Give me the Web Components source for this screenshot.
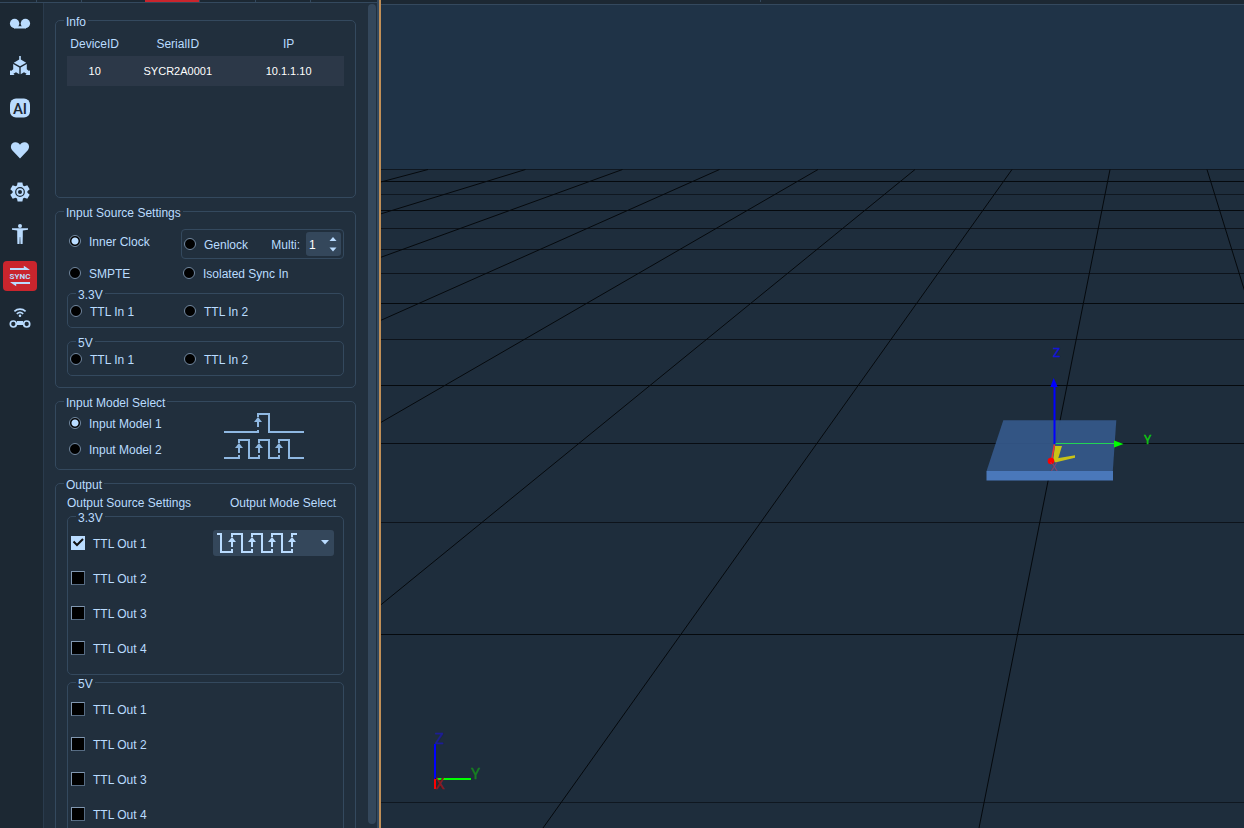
<!DOCTYPE html>
<html lang="en">
<head>
<meta charset="utf-8">
<title>Sync device settings</title>
<style>
  :root {
    --panel: #212f3d; --bar: #1c2833; --line: #34495e; --edge: #34495e;
    --text: #badcff; --field: #34475b; --red: #c9252d;
  }
  * { box-sizing: border-box; }
  html, body { height: 100%; }
  body {
    margin: 0; display: grid; grid-template-columns: auto minmax(0, 1fr);
    overflow: hidden; background: var(--panel); color: var(--text);
    font: 12px/14px "Liberation Sans", Arial, sans-serif;
  }
  .dock { display: grid; grid-template-rows: auto minmax(0, 1fr); min-height: 0; height: 100vh; border-right: 2px solid #c08f57; }
  .dock-inner { border-right: 2px solid var(--edge); display: grid; grid-template-rows: auto minmax(0, 1fr); grid-row: 1 / -1; min-height: 0; }
  .work { display: flex; min-height: 0; }
  .viewport { display: grid; grid-template-rows: auto minmax(0, 1fr); height: 100vh; min-width: 0; }
  .pair { display: grid; grid-template-columns: 114px 1fr; align-items: start; }
  .inputs { padding: 13px 11px 11px; }
  .inputs .lead > :first-child, .inputs .second > * { padding-left: 2px; }
  .inputs .second { margin: 2px 0 3px; }
  .inputs ui-group + ui-group { margin-top: 8px; }
  .ttl-in { padding: 1px 2px 4px; }
  .genlock { display: flex; align-items: center; height: 30px; padding: 0 2px; border: 1px solid var(--line); border-radius: 4px; }
  .genlock ui-spin { margin-left: auto; }
  .models { display: grid; grid-template-columns: 157px 1fr; grid-auto-rows: 26px; align-items: center; padding: 4px 11px 7px; }
  .models ui-choice { padding-left: 2px; }
  .outputs { padding: 8px 11px 11px; }
  .outputs .heads { display: grid; grid-template-columns: 163px 1fr; padding-bottom: 1px; }
  .outputs ui-group + ui-group { margin-top: 2px; }
  .ttl-out { display: grid; grid-auto-rows: 35px; align-items: center; padding: 4px 9px 9px 3px; }
  .ttl-out .first { display: grid; grid-template-columns: 142px 1fr; align-items: center; }
</style>
</head>
<body>
<div class="dock"><div class="dock-inner">
  <tab-strip>
    <i style="width:37px"></i><i style="width:45px"></i><i style="width:63px" class="plain"></i><i style="width:55px" class="active"></i><i style="width:56px"></i><i style="width:55px"></i>
  </tab-strip>
  <div class="work">
    <side-bar></side-bar>
    <scroll-pane>
      <ui-group label="Info"><device-table></device-table></ui-group>

      <ui-group label="Input Source Settings">
        <div class="inputs">
          <div class="pair lead">
            <ui-choice label="Inner Clock" group="source" checked></ui-choice>
            <div class="genlock"><ui-choice label="Genlock" group="source"></ui-choice><ui-spin label="Multi:" value="1"></ui-spin></div>
          </div>
          <div class="pair second">
            <ui-choice label="SMPTE" group="source"></ui-choice>
            <ui-choice label="Isolated Sync In" group="source"></ui-choice>
          </div>
          <ui-group label="3.3V"><div class="pair ttl-in">
            <ui-choice label="TTL In 1" group="source"></ui-choice>
            <ui-choice label="TTL In 2" group="source"></ui-choice>
          </div></ui-group>
          <ui-group label="5V"><div class="pair ttl-in">
            <ui-choice label="TTL In 1" group="source"></ui-choice>
            <ui-choice label="TTL In 2" group="source"></ui-choice>
          </div></ui-group>
        </div>
      </ui-group>

      <ui-group label="Input Model Select">
        <div class="models">
          <ui-choice label="Input Model 1" group="model" checked></ui-choice><wave-icon kind="single"></wave-icon>
          <ui-choice label="Input Model 2" group="model"></ui-choice><wave-icon kind="triple"></wave-icon>
        </div>
      </ui-group>

      <ui-group label="Output">
        <div class="outputs">
          <div class="heads"><span>Output Source Settings</span><span>Output Mode Select</span></div>
          <ui-group label="3.3V"><div class="ttl-out">
            <div class="first"><ui-choice type="checkbox" label="TTL Out 1" checked></ui-choice><mode-select></mode-select></div>
            <ui-choice type="checkbox" label="TTL Out 2"></ui-choice>
            <ui-choice type="checkbox" label="TTL Out 3"></ui-choice>
            <ui-choice type="checkbox" label="TTL Out 4"></ui-choice>
          </div></ui-group>
          <ui-group label="5V"><div class="ttl-out">
            <ui-choice type="checkbox" label="TTL Out 1"></ui-choice>
            <ui-choice type="checkbox" label="TTL Out 2"></ui-choice>
            <ui-choice type="checkbox" label="TTL Out 3"></ui-choice>
            <ui-choice type="checkbox" label="TTL Out 4"></ui-choice>
          </div></ui-group>
        </div>
      </ui-group>
    </scroll-pane>
  </div>
</div></div>
<div class="viewport">
  <tab-strip tall><i style="width:44%"></i></tab-strip>
  <scene-view></scene-view>
</div>

<script>
const define = (name, html, setup) => customElements.define(name, class extends HTMLElement {
  connectedCallback() {
    if (this.shadowRoot) return;
    const root = this.attachShadow({ mode: "open" });
    root.innerHTML = "<style>*{box-sizing:border-box}</style>" + (typeof html === "function" ? html(this) : html);
    if (setup) setup(this, root);
  }
});

define("tab-strip", `<style>
  :host { display: flex; height: 3px; background: var(--bar); border-bottom: 1px solid var(--line); overflow: hidden; }
  :host([tall]) { height: 5px; }
  ::slotted(i) { border-right: 1px solid var(--line); height: 2px; flex: none; }
  ::slotted(i.plain) { border-right: 0; }
  ::slotted(i.active) { background: var(--red); }
</style><slot></slot>`);

define("side-bar", `<style>
  :host { display: block; flex: none; width: 44px; background: var(--bar); border-right: 1px solid #2a3b4d; }
  nav { display: flex; flex-direction: column; gap: 12px; padding: 6px 6px 0 3px; }
  button { display: grid; place-items: center; width: 34px; height: 30px; padding: 0; border: 0; border-radius: 4px; background: none; color: var(--text); }
  button[aria-pressed=true] { background: var(--red); }
  svg { width: 22px; height: 22px; fill: currentColor; display: block; }
  text { font-family: "Liberation Sans Narrow", Roboto, sans-serif; font-weight: 700; }
  text.ai { font-family: Roboto, sans-serif; font-weight: 500; }
</style><nav aria-label="Tools">
<button aria-label="Recording"><svg viewBox="0 0 22 22"><circle cx="5.600" cy="10.500" r="4.700"/><circle cx="16.400" cy="10.500" r="4.700"/><path d="M5 13.200h12v2.300H5z"/></svg></button>
<button aria-label="Rigid body"><svg viewBox="0 0 22 22"><path d="M10.200 1h1.600v3.500l5.400 3.300L11 11.200 4.800 7.800l5.400-3.300zM4.200 9l6.100 3.600v6.600l-3.300-2-2.600 1.500 1.200 1.300H1v-4.400l1.400.2 1.800-1.600zM17.800 9l-6.100 3.600v6.600l3.300-2 2.600 1.500-1.200 1.300H21v-4.400l-1.400.2-1.800-1.600z"/></svg></button>
<button aria-label="AI"><svg viewBox="0 0 22 22"><rect x="1" y="1.500" width="20" height="19" rx="6"/><text class="ai" x="11" y="16.500" text-anchor="middle" font-size="15" fill="#1c2833">AI</text></svg></button>
<button aria-label="Health"><svg viewBox="0 0 22 22"><path d="M11 19.500 3.200 11.300C.7 8.200 2 3.400 6.100 3.200 8.500 3 10 4.300 11 5.800 12 4.300 13.500 3 15.900 3.200 20 3.400 21.300 8.200 18.800 11.300z"/></svg></button>
<button aria-label="Settings"><svg viewBox="0 0 22 22"><path d="M8.600 1.400h4.800l.6 3 1.400.8 2.900-1 2.400 4.100-2.300 2v1.400l2.300 2-2.400 4.100-2.900-1-1.400.8-.6 3H8.600l-.6-3-1.400-.8-2.900 1-2.400-4.100 2.300-2v-1.400l-2.300-2L3.700 4.200l2.900 1L8 4.400z"/><circle cx="11" cy="11" r="4.300" fill="none" stroke="#1c2833" stroke-width="1.200"/><circle cx="11" cy="11" r="2" fill="#1c2833"/></svg></button>
<button aria-label="Skeleton"><svg viewBox="0 0 22 22"><circle cx="11" cy="3" r="2"/><path d="M3 5.300h16v1.400l-5.200.8v5.500l-.2 8h-2.100L11.200 14h-.4l-.3 7H8.400l-.2-8V7.500L3 6.700z"/></svg></button>
<button aria-label="Sync" aria-pressed="true"><svg viewBox="0 0 22 22"><path d="M1 3h13.800V.8L20.500 4.400V5H1zM21 19H7.200v2.200L1.500 17.600V17H21z"/><text x="11" y="14" text-anchor="middle" font-size="8">SYNC</text></svg></button>
<button aria-label="Wireless"><svg viewBox="0 0 22 22"><g fill="none" stroke="currentColor" stroke-width="1.700"><path d="M5.400 4.300c3.200-2.800 8-2.800 11.200 0M7.800 6.800c1.900-1.600 4.500-1.600 6.400 0"/><circle cx="4.300" cy="17" r="3"/><circle cx="17.700" cy="17" r="3"/></g><circle cx="11" cy="8.800" r="1.300"/><path d="M8 14h6v4H8z"/></svg></button>
</nav>`);

define("scroll-pane", `<style>
  :host { display: flex; background: var(--panel); min-height: 0; overflow: hidden; }
  .content { display: flex; flex-direction: column; gap: 8px; width: 324px; padding: 12px 12px 0 11px; overflow: auto; scrollbar-width: none; }
  .thumb { width: 8px; margin: 1px 1px 4px 0; border-radius: 4px; background: var(--field); }
</style><div class="content"><slot></slot></div><div class="thumb"></div>`);

define("ui-group", el => `<style>
  :host { display: block; flex: none; }
  fieldset { margin: 0; padding: 0; min-width: 0; border: 1px solid var(--line); border-radius: 5px; }
  legend { height: 10px; line-height: 14px; margin-left: 8px; padding: 0 2px; }
</style><fieldset><legend>${el.getAttribute("label")}</legend><slot></slot></fieldset>`);

define("device-table", `<style>
  :host { display: block; min-height: 172px; padding: 7px 11px 0; }
  table { width: 100%; table-layout: fixed; border-collapse: collapse; text-align: center; }
  th, td { padding: 0; }
  th { height: 24px; font-weight: 400; }
  td { height: 30px; background: #2c3848; color: #fff; font-size: 11px; }
  .id { width: 20%; }
</style><table><thead><tr><th class="id">DeviceID</th><th>SerialID</th><th>IP</th></tr></thead>
<tbody><tr><td>10</td><td>SYCR2A0001</td><td>10.1.1.10</td></tr></tbody></table>`);

define("ui-choice", el => {
  const type = el.getAttribute("type") || "radio";
  return `<style>
  :host { display: block; }
  label { display: flex; align-items: center; gap: 8px; height: 24px; white-space: nowrap; }
  .text { padding-top: 2px; }
  input { appearance: none; margin: 0; width: 12px; height: 12px; border: 1px solid #7288a0; border-radius: 50%; background: #000; }
  input:checked { background: radial-gradient(circle, var(--text) 3px, #000 4px); }
  input[type=checkbox] { width: 14px; height: 14px; border-radius: 0; border-color: #8197b0 #566b82 #566b82 #8197b0; }
  input[type=checkbox]:checked { background: var(--text); border-color: var(--text); }
  .box { display: grid; }
  .box > * { grid-area: 1 / 1; }
  svg { display: none; width: 14px; height: 14px; pointer-events: none; }
  input[type=checkbox]:checked + svg { display: block; }
</style><label><span class="box"><input type="${type}" ${el.hasAttribute("checked") ? "checked" : ""}><svg viewBox="0 0 14 14"><path d="M2.500 5.500 6 9l6-6" fill="none" stroke="#111" stroke-width="2"/></svg></span><span class="text">${el.getAttribute("label")}</span></label>`;
}, (el, root) => {
  const group = el.getAttribute("group");
  if (!group) return;
  // Radios live in separate shadow roots, so exclusivity is kept here.
  root.querySelector("input").addEventListener("change", () => {
    document.querySelectorAll(`ui-choice[group="${group}"]`).forEach(peer => {
      if (peer !== el) peer.shadowRoot.querySelector("input").checked = false;
    });
  });
});

define("ui-spin", el => `<style>
  :host { display: block; }
  label { display: flex; align-items: center; gap: 6px; }
  .text { padding-top: 2px; }
  .field { display: flex; align-items: center; width: 35px; height: 24px; padding: 0 4px 0 3px; border-radius: 3px; background: var(--field); }
  input { appearance: textfield; width: 20px; height: 24px; min-width: 0; margin: 0; padding: 1px 0 0; border: 0; background: none; color: #fff; font: inherit; outline: 0; }
  input::-webkit-inner-spin-button { display: none; }
  svg { flex: none; width: 8px; height: 16px; fill: var(--text); }
</style><label><span class="text">${el.getAttribute("label")}</span><span class="field"><input type="number" value="${el.getAttribute("value")}"><svg viewBox="0 0 8 16"><path d="M.5 5 4 1l3.500 4zM.5 11.500l3.500 4 3.500-4z"/></svg></span></label>`);

const arrow = (x, dy = 0) => `<path d="M${x} ${9 + dy}v6" /><path class="head" d="M${x - 4} ${10 + dy}l4-5 4 5z"/>`;
const waves = {
  single: `<path d="M0 20h34v-2M34 5V2h11v18h35"/>${arrow(34)}`,
  triple: `<path d="M0 20h15v-3M15 5V2h10v18h10v-3M35 5V2h10v18h10v-3M55 5V2h10v18h15"/>${arrow(15)}${arrow(35)}${arrow(55)}`,
  train: `<path d="M0 2h4v18h11v-3M15 5V2h10v18h10v-3M35 5V2h10v18h10v-3M55 5V2h10v18h10v-3M75 5V2h5"/>${arrow(15)}${arrow(35)}${arrow(55)}${arrow(75)}`
};
define("wave-icon", el => `<style>
  :host { display: block; color: #8fb8e2; }
  :host([kind=train]) { color: var(--text); }
  svg { display: block; width: 80px; height: 22px; fill: none; stroke: currentColor; stroke-width: 2; overflow: visible; }
  .head { fill: currentColor; stroke: none; }
</style><svg viewBox="0 0 80 22" aria-hidden="true">${waves[el.getAttribute("kind")]}</svg>`);

define("mode-select", `<style>
  :host { display: grid; width: 121px; height: 26px; align-items: center; }
  select, wave-icon, .caret { grid-area: 1 / 1; }
  select { appearance: none; width: 100%; height: 26px; margin: 0; border: 0; border-radius: 3px; background: var(--field); }
  wave-icon, .caret { pointer-events: none; }
  wave-icon { margin-left: 4px; }
  .caret { justify-self: end; width: 8px; height: 5px; margin-right: 5px; fill: var(--text); }
</style><select aria-label="Output mode"><option value="rising" aria-label="Rising edge pulse train"></option></select>
<wave-icon kind="train"></wave-icon><svg class="caret" viewBox="0 0 8 5"><path d="M0 0h8L4 4.500z"/></svg>`);

define("scene-view", () => {
  const tops = [428, 525.5, 622.5, 719.5, 818, 915, 1012, 1110, 1207];
  const bottoms = [-2056, -1622, -1190, -759, -320, 107, 543, 979, 1411];
  const rows = [[169, .6], [181, 1], [194, .6], [210, 1], [228, .7], [249, .7], [273, .7], [303, 1], [339, .7], [385, 1], [443, .9], [522, .7], [634, 1], [802, .6]];
  return `<style>
  :host { display: block; min-height: 0; }
  svg { display: block; width: 100%; height: 100%; }
  text { font-family: Roboto, "DejaVu Sans", sans-serif; }
  .grid { stroke: #05090d; fill: none; }
</style><svg viewBox="381 5 863 823" preserveAspectRatio="xMidYMid slice" role="img" aria-label="3D view">
<defs><filter id="soft"><feGaussianBlur stdDeviation=".7"/></filter></defs>
<path fill="#1f3347" d="M381 5h863v164H381z"/><path fill="#1e2d3c" d="M381 169h863v659H381z"/>
<g class="grid">${rows.map(([y, o]) => `<path opacity="${o}" d="M381 ${y}.5h863"/>`).join("")}
${tops.map((x, i) => `<path d="M${x} 169.500L${bottoms[i]} 828"/>`).join("")}</g>
<path fill="#35588a" fill-opacity=".93" d="M1003.300 420.300h113l-3.500 51H986.500z"/><path fill="#4a78ba" d="M986.500 471h126.500v9.500H986.500z"/>
<path d="M1055 443.500h61" stroke="#22d455" stroke-width="1.200"/><path fill="#0f0" d="M1114 440.500l9.500 3.500-9.500 3.500z"/>
<g filter="url(#soft)" fill="#c9c318"><path d="M1055 446h7l-4 13-5 2z"/><path d="M1053 459l22-3.800v2.600l-20 4.800z"/></g>
<path d="M1054.500 444V385" stroke="#00f" stroke-width="2"/><path fill="#00f" d="M1053.700 378l4 9h-7.400z"/>
<path d="M1054.500 444.500l-3 16" stroke="#e33" stroke-width="1.500"/><circle cx="1051" cy="461" r="3.300" fill="red"/>
<g stroke-width=".4"><text x="1053" y="357" font-size="12" fill="#1414d8" stroke="#1414d8">Z</text><text x="1144" y="444" font-size="12" fill="#0fc80f" stroke="#0fc80f">Y</text></g>
<text x="1050" y="471" font-size="12" fill="#a33a5a" fill-opacity=".7">X</text>
<path fill="#00f" d="M434 744h2v35h-2z"/><path fill="#0f0" d="M436 778h35v2h-35z"/><path fill="red" d="M434 779h2v10h-2z"/>
<g stroke-width=".4"><text x="435" y="744" font-size="15" fill="#1c1c96" stroke="#1c1c96">Z</text><text x="471" y="779" font-size="15" fill="#168020" stroke="#168020">Y</text><text x="435" y="789" font-size="15" fill="#8c181c" stroke="#8c181c">X</text></g>
</svg>`;
});
</script>
</body>
</html>
